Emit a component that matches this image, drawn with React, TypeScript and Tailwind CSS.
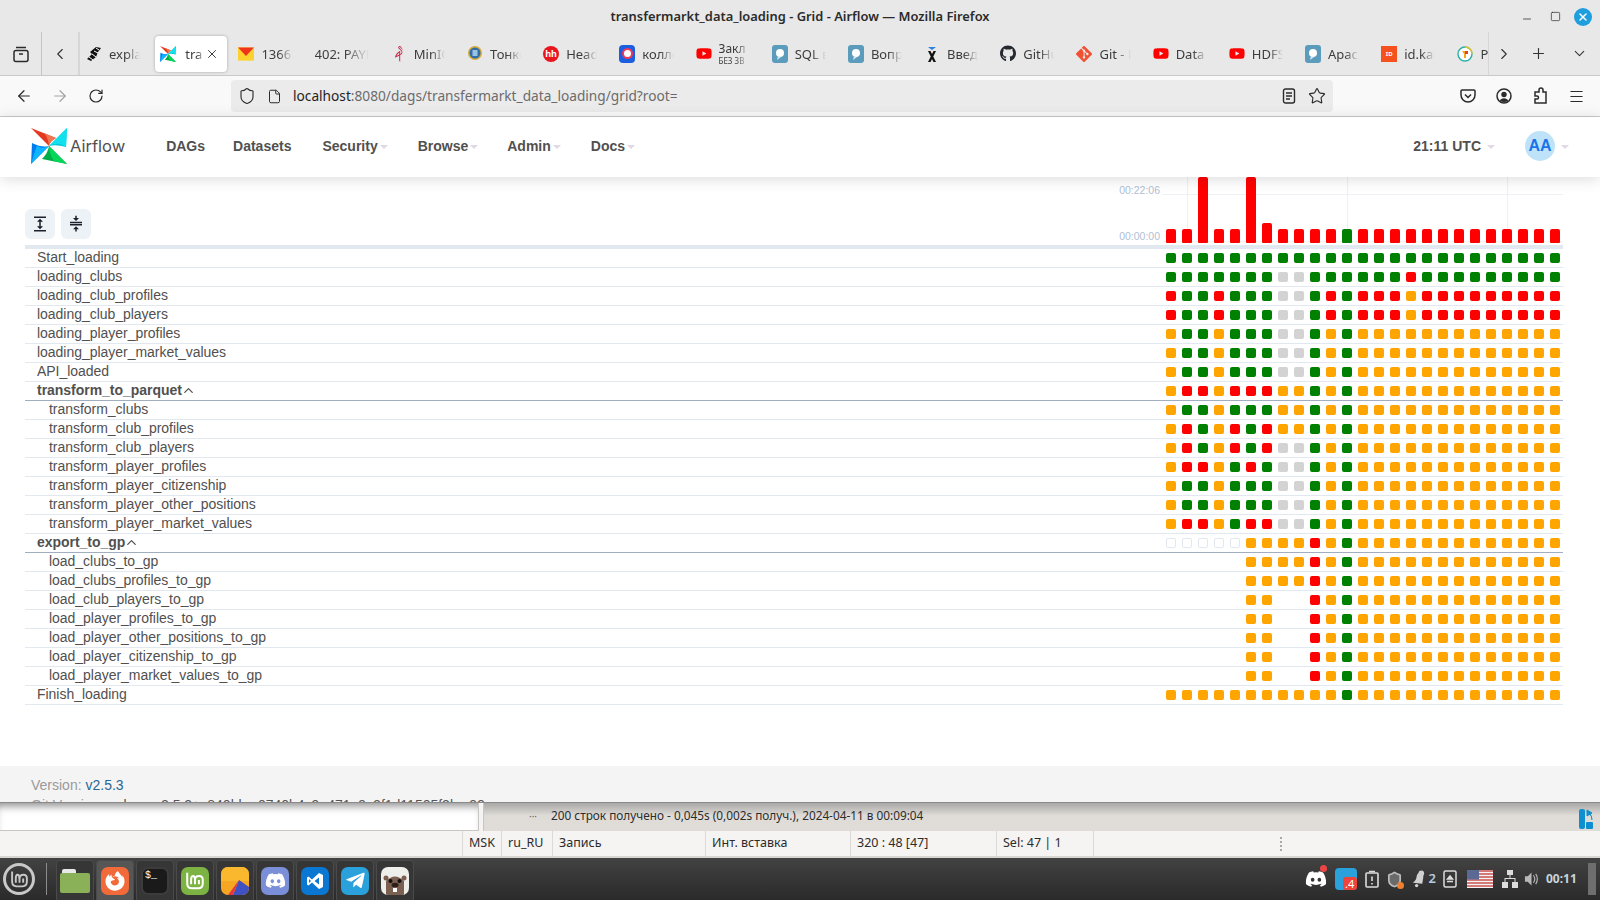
import { ReactNode } from "react";
import {
  ArrowLeft,
  ArrowRight,
  ChevronDown,
  ChevronLeft,
  ChevronRight,
  ChevronUp,
  File,
  Menu,
  Minus,
  Plus,
  RotateCw,
  Shield,
  Square,
  Star,
  X,
} from "lucide-react";
import { FaDiscord, FaFirefoxBrowser, FaGithub, FaTelegramPlane, FaYoutube } from "react-icons/fa";
import { MdCompress, MdExpand } from "react-icons/md";
import { SiGit, SiMinio } from "react-icons/si";

const uiFont = "[font-family:'Noto_Sans',sans-serif]";

const AirflowLogo = ({ size = 36 }: { size?: number }) => (
  <svg width={size} height={size} viewBox="0 0 36 36">
    <path d="M0 0 L25 10 Q19 13 18 18 Z" fill="#e43921" />
    <path d="M25 10 L13 5 Q17 9 18 18 Q19 13 25 10 Z" fill="#f0764f" />
    <path d="M36 0 L35 19 Q25 16 18 18 Z" fill="#00c7d4" />
    <path d="M36 0 L18 18 Q27 13 35 19 Z" fill="#11e1ee" />
    <path d="M36 36 L11 31 Q17 25 18 18 Z" fill="#00ad46" />
    <path d="M36 36 L18 18 Q18 26 23 33 Z" fill="#04d659" />
    <path d="M0 36 L1 15 Q11 20 18 18 Z" fill="#017cee" />
    <path d="M0 36 L18 18 Q9 22 6 17 Z" fill="#0cb6ff" />
  </svg>
);

const Drop = () => (
  <svg width="16" height="18" viewBox="0 0 16 18">
    <rect width="16" height="18" rx="3" fill="#5b9cbd" />
    <circle cx="8" cy="8" r="4" fill="#fff" />
    <path d="M6 11 L5 15 L9 12 Z" fill="#dbe9f0" />
  </svg>
);

type Tab = { icon?: ReactNode; label: string; sub?: string; active?: boolean };

const tabs: Tab[] = [
  {
    icon: (
      <svg width="16" height="16" viewBox="0 0 16 16">
        <path d="M1 13 L6 8 L4 6 L10 1 L15 2 L12 6 L10 11 L5 15 Z" fill="#111" />
        <path d="M3 11 L7 14 M6 8 L10 11 M8 5 L12 7 M10 2 L13 4" stroke="#fff" strokeWidth="1" />
      </svg>
    ),
    label: "expla",
  },
  { icon: <AirflowLogo size={16} />, label: "tra", active: true },
  {
    icon: (
      <svg width="17" height="14" viewBox="0 0 17 14">
        <rect width="17" height="14" fill="#fcd22e" />
        <path d="M0 0 H17 L8.5 9 Z" fill="#f0341c" />
      </svg>
    ),
    label: "1366",
  },
  { label: "402: PAYM" },
  { icon: <SiMinio size={16} color="#c72c48" />, label: "MinIO" },
  {
    icon: (
      <svg width="16" height="16" viewBox="0 0 16 16">
        <circle cx="8" cy="7" r="7" fill="#d6a93a" />
        <circle cx="8" cy="7" r="5.5" fill="#2f6ea8" />
        <rect x="5.5" y="4" width="5" height="6" fill="#9cc2e0" />
      </svg>
    ),
    label: "Тонко",
  },
  {
    icon: (
      <span className="flex h-4 w-4 items-center justify-center rounded-full bg-[#e8141e] text-[9px] font-bold leading-none text-white">
        hh
      </span>
    ),
    label: "Head",
  },
  {
    icon: (
      <span className="flex h-[18px] w-4 items-center justify-center rounded-[4px] bg-[#1b5ee0]">
        <span className="h-[11px] w-[11px] rounded-full border-[2.5px] border-[#f0385a] bg-white" />
      </span>
    ),
    label: "колле",
  },
  { icon: <FaYoutube size={17} color="#f00" />, label: "Закл", sub: "БЕЗ ЗВ" },
  { icon: <Drop />, label: "SQL в" },
  { icon: <Drop />, label: "Вопр" },
  {
    icon: (
      <svg width="16" height="18" viewBox="0 0 16 18">
        <path d="M4 2 H12 L8 5 Z" fill="#2e7fe0" />
        <path d="M4 6 H6.5 L12 17 H9.5 Z M9.5 6 H12 L6.5 17 H4 Z" fill="#111" />
      </svg>
    ),
    label: "Введ",
  },
  { icon: <FaGithub size={17} color="#24292f" />, label: "GitHu" },
  { icon: <SiGit size={16} color="#f05133" />, label: "Git - Б" },
  { icon: <FaYoutube size={17} color="#f00" />, label: "Data" },
  { icon: <FaYoutube size={17} color="#f00" />, label: "HDFS" },
  { icon: <Drop />, label: "Apach" },
  {
    icon: (
      <span className="flex h-4 w-4 items-center justify-center bg-[#f4511e] text-[6px] font-bold leading-none text-white">
        ID
      </span>
    ),
    label: "id.kar",
  },
  {
    icon: (
      <svg width="16" height="16" viewBox="0 0 16 16">
        <circle cx="8" cy="8" r="7" fill="#fff" stroke="#2bb0a8" strokeWidth="1.4" />
        <path d="M8 1 A7 7 0 0 1 15 8" fill="none" stroke="#e8c020" strokeWidth="1.4" />
        <path d="M5 5 H11 L9 8 V12 H7 V8 Z" fill="#f2a81e" />
        <rect x="8" y="5" width="3" height="3" fill="#e0402a" />
      </svg>
    ),
    label: "Po",
  },
];

const TabItem = ({ tab }: { tab: Tab }) => {
  if (tab.active) {
    return (
      <div className="w-[76.2px] shrink-0">
        <div className="-ml-px flex h-9 w-[72px] items-center rounded-[4px] bg-white pl-[5px] pr-2 text-[#404040] shadow-[0_0_3px_rgba(0,0,0,0.3)]">
          <span className="mr-[9px] flex w-4 shrink-0 justify-center">{tab.icon}</span>
          <div className="w-[21px] overflow-hidden whitespace-nowrap text-[13px] leading-[18px] [mask-image:linear-gradient(to_right,black_60%,transparent)]">
            {tab.label}
          </div>
          <X size={14} strokeWidth={1.5} className="ml-auto shrink-0 text-[#222]" />
        </div>
      </div>
    );
  }
  return (
    <div className="flex h-9 w-[76.2px] shrink-0 items-center gap-[7px] pl-[6px] pr-[16px] text-[#3c3c3c]">
      {tab.icon && <span className="flex w-4 shrink-0 justify-center">{tab.icon}</span>}
      <div className="min-w-0 flex-1 overflow-hidden whitespace-nowrap [mask-image:linear-gradient(to_right,black_55%,transparent)]">
        <div className={tab.sub ? "text-[12px] leading-[14px]" : "text-[13px] leading-[18px]"}>{tab.label}</div>
        {tab.sub && <div className="text-[8px] leading-[10px]">{tab.sub}</div>}
      </div>
    </div>
  );
};

const TitleBar = () => (
  <div className="grid h-8 grid-cols-[1fr_auto_1fr] items-center bg-[#e8e8e8] pt-px">
    <div />
    <div className="text-[12.9px] font-semibold text-[#2b2b2b]">
      transfermarkt_data_loading - Grid - Airflow — Mozilla Firefox
    </div>
    <div className="flex items-center justify-end pr-2">
      <Minus size={12} strokeWidth={1.6} className="mt-1 text-[#333]" />
      <Square size={11} strokeWidth={1.6} className="ml-[17px] text-[#333]" />
      <span className="ml-[13px] flex h-[18px] w-[18px] items-center justify-center rounded-full bg-[#1f9ede]">
        <X size={12} strokeWidth={3} className="text-white" />
      </span>
    </div>
  </div>
);

const TabStrip = () => (
  <div className="flex h-11 items-center border-b border-[#c9c9c9] bg-[#e8e8e8]">
    <div className="flex h-[43px] w-[42px] shrink-0 items-center justify-center border-r border-[#c4c4c4]">
      <svg width="18" height="18" viewBox="0 0 18 18" fill="none" stroke="#2b2b2b" strokeWidth="1.5">
        <path d="M4 2.5 H14" />
        <rect x="2" y="5.5" width="14" height="11" rx="2" />
        <path d="M7 9 H11" />
      </svg>
    </div>
    <div className="flex h-[43px] w-[38px] shrink-0 items-center justify-center border-r-2 border-[#d6d6d6]">
      <ChevronLeft size={18} strokeWidth={1.5} className="text-[#333]" />
    </div>
    <div className="flex h-[43px] w-[1408px] shrink-0 items-center overflow-hidden">
      {tabs.map((t) => (
        <TabItem key={t.label} tab={t} />
      ))}
    </div>
    <div className="flex h-[43px] w-[30px] shrink-0 items-center justify-center border-l border-[#d6d6d6]">
      <ChevronRight size={18} strokeWidth={1.5} className="text-[#333]" />
    </div>
    <Plus size={17} strokeWidth={1.6} className="ml-[12px] shrink-0 text-[#333]" />
    <ChevronDown size={17} strokeWidth={1.5} className="ml-6 shrink-0 text-[#333]" />
  </div>
);

const Toolbar = () => (
  <div className="flex h-[41px] items-center border-b border-[#c9c9c9] bg-[#f9f9fa]">
    <ArrowLeft size={18} strokeWidth={1.6} className="ml-[15px] text-[#2b2b2b]" />
    <ArrowRight size={18} strokeWidth={1.6} className="ml-[18px] text-[#a4a4a4]" />
    <RotateCw size={16} strokeWidth={1.8} className="ml-[19px] text-[#2b2b2b]" />
    <div className="ml-[127px] flex h-8 w-[1102px] items-center rounded-[4px] bg-[#ebebeb] pl-[7px] text-[13.7px]">
      <Shield size={18} strokeWidth={1.5} className="text-[#2b2b2b]" />
      <File size={15} strokeWidth={1.6} className="ml-[11px] text-[#2b2b2b]" />
      <span className="ml-[11px] text-[#6b6b6b]">
        <span className="text-[#1f1f1f]">localhost</span>:8080/dags/transfermarkt_data_loading/grid?root=
      </span>
      <svg width="14" height="16" viewBox="0 0 14 16" fill="none" stroke="#2b2b2b" strokeWidth="1.4" className="ml-auto">
        <rect x="1.5" y="1" width="11" height="14" rx="2" />
        <path d="M4 5 H10 M4 8 H10 M4 11 H8" />
      </svg>
      <Star size={18} strokeWidth={1.5} className="ml-[12px] mr-[7px] text-[#2b2b2b]" />
    </div>
    <div className="ml-[127px] flex items-center gap-[20px] text-[#2b2b2b]">
      <svg width="16" height="16" viewBox="0 0 16 16" fill="none" stroke="#2b2b2b" strokeWidth="1.5">
        <path d="M2 2 H14 Q15 2 15 3 V7 A7 7 0 0 1 1 7 V3 Q1 2 2 2 Z" />
        <path d="M5 6.5 L8 9.5 L11 6.5" />
      </svg>
      <svg width="16" height="16" viewBox="0 0 16 16">
        <circle cx="8" cy="8" r="7" fill="none" stroke="#2b2b2b" strokeWidth="1.5" />
        <circle cx="8" cy="6.5" r="2.7" fill="#2b2b2b" />
        <path d="M3.5 12.5 Q8 8 12.5 12.5 Q8 15.5 3.5 12.5 Z" fill="#2b2b2b" />
      </svg>
      <svg width="16" height="18" viewBox="0 0 16 18" fill="none" stroke="#2b2b2b" strokeWidth="1.5">
        <path d="M7 5 V3 Q7 1 9 1 Q11 1 11 3 V5 H14 V16 H3 V12 H5 Q6.5 12 6.5 10.5 Q6.5 9 5 9 H3 V5 Z" />
      </svg>
      <Menu size={17} strokeWidth={1.5} />
    </div>
  </div>
);

const Caret = ({ className = "" }: { className?: string }) => (
  <span
    className={`inline-block h-0 w-0 border-x-[4px] border-t-[4px] border-x-transparent border-t-[#e0d8e4] ${className}`}
  />
);

const navItems = [
  { label: "DAGs", ml: "ml-[41px]" },
  { label: "Datasets", ml: "ml-[28px]" },
  { label: "Security", caret: true, ml: "ml-[31px]" },
  { label: "Browse", caret: true, ml: "ml-[30px]" },
  { label: "Admin", caret: true, ml: "ml-[29px]" },
  { label: "Docs", caret: true, ml: "ml-[30px]" },
];

const NavBar = () => (
  <div className="relative z-10 flex h-[60px] shrink-0 items-center bg-white pb-[2px] pl-[31px] font-['Liberation_Sans',sans-serif] text-[14px] font-bold text-[#51504f] shadow-[0_2px_14px_rgba(0,0,0,0.14)]">
    <AirflowLogo />
    <span className="ml-[3px] font-['Inter',sans-serif] text-[16.5px] font-normal">Airflow</span>
    {navItems.map((n) => (
      <div key={n.label} className={`flex items-center ${n.ml}`}>
        {n.label}
        {n.caret && <Caret className="ml-[2px] mt-[2px]" />}
      </div>
    ))}
    <div className="ml-auto flex items-center pr-[31px]">
      21:11 UTC
      <Caret className="ml-[6px] mt-[2px]" />
      <span className="ml-[30px] flex h-[30px] w-[30px] items-center justify-center rounded-full bg-[#bee3f8] text-[16px] text-[#1a73e8]">
        AA
      </span>
      <Caret className="ml-[6px] mt-[2px]" />
    </div>
  </div>
);

const cellColor: Record<string, string> = {
  g: "bg-[#008000]",
  r: "bg-[#ff0000]",
  o: "bg-[#ffa500]",
  s: "bg-[#d3d3d3]",
  e: "border border-[#e2e8f0] bg-white",
  n: "",
};

type Row = { name: string; cells: string; group?: boolean; child?: boolean };

const tail = "ooooooooooooo";

const rows: Row[] = [
  { name: "Start_loading", cells: "ggggggggggggggggggggggggg" },
  { name: "loading_clubs", cells: "gggggggssggggggrggggggggg" },
  { name: "loading_club_profiles", cells: "rggrgggssgrgrrrorrrrrrrrr" },
  { name: "loading_club_players", cells: "rggrgggssgrgrrrorrrrrrrrr" },
  { name: "loading_player_profiles", cells: "oggogggssgog" + tail },
  { name: "loading_player_market_values", cells: "oggogggssgog" + tail },
  { name: "API_loaded", cells: "oggogggssgog" + tail },
  { name: "transform_to_parquet", cells: "orrorrroogog" + tail, group: true },
  { name: "transform_clubs", cells: "oggogggoogog" + tail, child: true },
  { name: "transform_club_profiles", cells: "orgorgroogog" + tail, child: true },
  { name: "transform_club_players", cells: "orgorgrssgog" + tail, child: true },
  { name: "transform_player_profiles", cells: "orrogrgssgog" + tail, child: true },
  { name: "transform_player_citizenship", cells: "oggogggssgog" + tail, child: true },
  { name: "transform_player_other_positions", cells: "oggogggssgog" + tail, child: true },
  { name: "transform_player_market_values", cells: "orrogrrssgog" + tail, child: true },
  { name: "export_to_gp", cells: "eeeeeoooorog" + tail, group: true },
  { name: "load_clubs_to_gp", cells: "nnnnnoooorog" + tail, child: true },
  { name: "load_clubs_profiles_to_gp", cells: "nnnnnoooorog" + tail, child: true },
  { name: "load_club_players_to_gp", cells: "nnnnnoonnrog" + tail, child: true },
  { name: "load_player_profiles_to_gp", cells: "nnnnnoonnrog" + tail, child: true },
  { name: "load_player_other_positions_to_gp", cells: "nnnnnoonnrog" + tail, child: true },
  { name: "load_player_citizenship_to_gp", cells: "nnnnnoonnrog" + tail, child: true },
  { name: "load_player_market_values_to_gp", cells: "nnnnnoonnrog" + tail, child: true },
  { name: "Finish_loading", cells: "ooooooooooog" + tail },
];

const barHeights = [14, 14, 66, 14, 14, 66, 20];

const DurationChart = () => (
  <div className="relative h-[66px] w-[400px]">
    <div className="absolute inset-x-0 top-[17px] h-px bg-[#edf0f5]" />
    <div className="absolute inset-x-0 top-[64px] h-px bg-[#edf0f5]" />
    <div className="absolute top-0 left-[24px] h-[64px] w-px bg-[#edf0f5]" />
    <div className="absolute top-0 left-[184px] h-[64px] w-px bg-[#edf0f5]" />
    <div className="absolute top-0 left-[344px] h-[64px] w-px bg-[#edf0f5]" />
    <span className="absolute top-[6px] right-[403px] text-[10.5px] leading-[14px] text-[#b0bfd4]">00:22:06</span>
    <span className="absolute top-[52px] right-[403px] text-[10.5px] leading-[14px] text-[#b0bfd4]">00:00:00</span>
    <div className="relative flex h-full items-end gap-[6px] pl-[3px]">
      {Array.from({ length: 25 }).map((_, i) => (
        <div
          key={i}
          className={`w-[10px] rounded-t-[2px] rounded-b-[1px] ${i === 11 ? "bg-[#008000]" : "bg-[#ff0000]"}`}
          style={{ height: barHeights[i] ?? 14 }}
        />
      ))}
    </div>
  </div>
);

const GridRow = ({ row }: { row: Row }) => (
  <div
    className={`flex h-[19px] items-center justify-between border-b ${
      row.group ? "border-[#a0aec0]" : "border-[#e2e8f0]"
    }`}
  >
    <div
      className={`flex items-center pb-[2px] leading-[18px] tracking-[-0.03px] ${
        row.child ? "pl-[24px]" : "pl-3"
      } ${row.group ? "font-bold" : ""}`}
    >
      {row.name}
      {row.group && <ChevronUp size={15} strokeWidth={2} className="-ml-px mt-px" />}
    </div>
    <div className="flex gap-[6px] pr-[3px]">
      {row.cells.split("").map((c, i) => (
        <div key={i} className={`h-[10px] w-[10px] rounded-[2px] ${cellColor[c]}`} />
      ))}
    </div>
  </div>
);

const GridPanel = () => (
  <div className="flex-1 bg-white pl-[25px] pr-[37px] font-['Liberation_Sans',sans-serif] text-[14px] text-[#51504f]">
    <div className="flex h-[68px] items-end justify-between pb-[2px]">
      <div className="mb-[4px] flex gap-[6px]">
        <button className="flex h-[30px] w-[30px] items-center justify-center rounded-[6px] bg-[#edf2f7]">
          <MdExpand size={18} className="text-[#1a202c]" />
        </button>
        <button className="flex h-[30px] w-[30px] items-center justify-center rounded-[6px] bg-[#edf2f7]">
          <MdCompress size={18} className="text-[#1a202c]" />
        </button>
      </div>
      <DurationChart />
    </div>
    <div className="border-t-4 border-[#e2e8f0]">
      {rows.map((r) => (
        <GridRow key={r.name} row={r} />
      ))}
    </div>
  </div>
);

const Footer = () => (
  <div className="h-[36px] shrink-0 overflow-hidden bg-[#f4f4f4] pl-[31px] pt-[9px] font-['Liberation_Sans',sans-serif] text-[14px] leading-[20px] text-[#9a9a9a]">
    <div>
      Version: <span className="text-[#2a6496]">v2.5.3</span>
    </div>
    <div>
      Git Version: <span className="text-[#555]">.release:2.5.3+c840bb...0740b4c9a471e9c2f1d11505f3b...99</span>
    </div>
  </div>
);

const QueryStatus = () => (
  <div className="flex h-[29px] shrink-0 border-t border-[#8a8a8a] bg-[#f5f4f2] text-[11.8px] text-[#2c2c2c]">
    <div className="w-[479px] border-r border-b border-[#c8c6c2] bg-white shadow-[inset_0_8px_8px_-5px_rgba(0,0,0,0.45)]" />
    <div className="ml-[4px] flex flex-1 items-center border-l border-[#c8c6c2] bg-[linear-gradient(#a9a8a6,#dfdcd8_45%,#e0ddd9)] pl-[45px] pb-[3px]">
      <span className="mr-[14px] text-[10px] leading-none text-[#666]">···</span>
      200 строк получено - 0,045s (0,002s получ.), 2024-04-11 в 00:09:04
      <svg width="16" height="22" viewBox="0 0 16 22" className="ml-auto mr-[6px] mt-[6px]">
        <rect x="1" y="1" width="6" height="20" rx="2" fill="#0f8fd0" />
        <rect x="8" y="14" width="7" height="7" rx="1" fill="#0f8fd0" />
        <path d="M9 2 L14 5 L9 8 Z M12 6 Q14 8 14 12" fill="#0f8fd0" stroke="#0f8fd0" />
      </svg>
    </div>
  </div>
);

const statusCells = [
  { label: "MSK", w: "w-[39px]" },
  { label: "ru_RU", w: "w-[51px]" },
  { label: "Запись", w: "w-[153px]" },
  { label: "Инт. вставка", w: "w-[145px]" },
  { label: "320 : 48 [47]", w: "w-[146px]" },
  { label: "Sel: 47 | 1", w: "w-[97px]" },
];

const StatusBar = () => (
  <div className="flex h-[27px] shrink-0 items-stretch border-b-[2px] border-[#d8d6d2] bg-[#f5f4f2] pl-[462px] text-[12.5px] text-[#2c2c2c]">
    {statusCells.map((c) => (
      <div key={c.label} className={`flex items-center border-l border-[#dcdad6] pl-[6px] ${c.w}`}>
        {c.label}
      </div>
    ))}
    <div className="flex flex-1 items-center border-l border-[#dcdad6] pl-[186px]">
      <span className="h-[14px] border-l-2 border-dotted border-[#a8a8a8]" />
    </div>
  </div>
);

const Dock = ({ children, active }: { children: ReactNode; active?: boolean }) => (
  <div
    className={`flex h-10 w-[38px] shrink-0 items-center justify-center rounded-t-[4px] border-x border-t border-[#4a4a4a] ${
      active ? "bg-[#565656]" : "bg-[#363636]"
    }`}
  >
    {children}
  </div>
);

const IconBox = ({ className, children }: { className: string; children?: ReactNode }) => (
  <div className={`flex h-7 w-7 items-center justify-center overflow-hidden rounded-[7px] ${className}`}>{children}</div>
);

// linux mint "lm" mark, also used in the menu button
const MintMark = ({ size, color }: { size: number; color: string }) => (
  <svg width={size} height={size} viewBox="3 3 18 18" fill="none" stroke={color} strokeWidth="1.8">
    <path d="M5 4.5 V14 Q5 18.5 9 18.5 H15 Q19 18.5 19 14 V11 Q19 7.5 15.8 7.5 Q12 7.5 12 11 V15" />
    <path d="M12 11 Q12 7.5 10.2 7.5 Q8.5 7.5 8.5 11 V15" />
    <path d="M15.5 11 V15" />
  </svg>
);

const Taskbar = () => (
  <div className="flex h-[42px] shrink-0 items-center bg-[linear-gradient(#424242,#2a2a2a)] pl-[3px] text-[#d8d8d8]">
    <div className="flex h-8 w-8 items-center justify-center rounded-full border-[3px] border-[#c8c8c8]">
      <MintMark size={19} color="#c8c8c8" />
    </div>
    <div className="ml-[11px] h-8 w-px bg-[#8c8c8c]" />
    <div className="ml-[9px] flex gap-[2px] self-end">
      <Dock>
        <div className="relative h-6 w-[30px]">
          <div className="absolute top-0 left-[2px] h-2 w-[14px] rounded-t-[2px] bg-[#e8e8e8]" />
          <div className="absolute inset-x-0 top-[4px] bottom-0 rounded-[2px] bg-[#8bb158]" />
        </div>
      </Dock>
      <Dock active>
        <IconBox className="bg-[#f26a3a]">
          <FaFirefoxBrowser size={20} className="text-white" />
        </IconBox>
      </Dock>
      <Dock>
        <IconBox className="items-start justify-start border-2 border-[#3c3c3c] bg-[#1a1a1a] pl-[2px] font-['Liberation_Mono',monospace] text-[10px] leading-[14px] text-white">
          $_
        </IconBox>
      </Dock>
      <Dock>
        <IconBox className="bg-[#7cb342]">
          <MintMark size={20} color="#fff" />
        </IconBox>
      </Dock>
      <Dock>
        <IconBox className="bg-[#f6a623]">
          <svg width="28" height="28" viewBox="0 0 28 28">
            <path d="M0 0 H28 V14 H0 Z" fill="#f9b82d" />
            <path d="M18 13 L28 20 V28 H12 Z" fill="#3f51c4" />
            <path d="M18 13 L12 28 H7 Z" fill="#e23b3b" />
          </svg>
        </IconBox>
      </Dock>
      <Dock>
        <IconBox className="bg-[#7a8fd8]">
          <FaDiscord size={21} className="text-white" />
        </IconBox>
      </Dock>
      <Dock>
        <IconBox className="bg-[#0a77d2]">
          <svg width="18" height="18" viewBox="0 0 18 18" fill="#fff">
            <path d="M13 1 L17 3 V15 L13 17 L6 10.5 L2.5 13.5 L1 12.5 V5.5 L2.5 4.5 L6 7.5 Z M13 5.5 L8.5 9 L13 12.5 Z M3 7 V11 L5 9 Z" fillRule="evenodd" />
          </svg>
        </IconBox>
      </Dock>
      <Dock>
        <IconBox className="bg-[#2aa1da]">
          <FaTelegramPlane size={21} className="text-white" />
        </IconBox>
      </Dock>
      <Dock>
        <IconBox className="bg-[#eeeeea]">
          <svg width="28" height="28" viewBox="0 0 28 28">
            <circle cx="5" cy="11" r="2.5" fill="#7b5f50" />
            <circle cx="23" cy="11" r="2.5" fill="#7b5f50" />
            <path d="M5 14 Q14 5 23 14 V28 H5 Z" fill="#7b5f50" />
            <circle cx="9.5" cy="14" r="2" fill="#111" />
            <circle cx="18.5" cy="14" r="2" fill="#111" />
            <ellipse cx="14" cy="18" rx="3.5" ry="2.2" fill="#2b2019" />
            <rect x="12" y="21" width="4" height="4" fill="#fff" />
          </svg>
        </IconBox>
      </Dock>
    </div>
    <div className="ml-auto flex items-center pr-[4px] text-[13px] font-semibold">
      <span className="relative">
        <FaDiscord size={22} className="text-white" />
        <span className="absolute -top-[3px] right-0 h-[7px] w-[7px] rounded-full bg-[#ef4444]" />
      </span>
      <span className="relative ml-[8px] h-[22px] w-[22px] rounded-[4px] bg-[#2aa1da]">
        <span className="absolute right-0 bottom-0 h-[13px] w-[14px] rounded-[3px] bg-[#f0433a] text-center text-[11px] font-normal leading-[13px] text-white">
          .4
        </span>
      </span>
      <svg width="14" height="18" viewBox="0 0 14 18" fill="none" stroke="#dcdcdc" strokeWidth="1.6" className="ml-[8px]">
        <rect x="1" y="3" width="12" height="14" rx="1" />
        <path d="M4 1.5 H10 M7 6.5 V11 M7 13 V14.5" />
      </svg>
      <span className="relative ml-[7px]">
        <Shield size={17} strokeWidth={2.4} fill="#6a6a6a" className="text-[#bcbcbc]" />
        <span className="absolute -right-[1px] -bottom-[1px] h-[7px] w-[7px] rounded-full bg-[#f08030]" />
      </span>
      <svg width="15" height="18" viewBox="0 0 16 18" fill="#d0d0d0" className="ml-[8px]">
        <path d="M10 2 Q14 4 13 8 L12 14 L2 13 Q6 10 6 6 Q7 2 10 2 Z" />
        <circle cx="11" cy="3" r="3" />
        <circle cx="6" cy="16" r="1.8" />
      </svg>
      <span className="ml-[3px] text-[#b9cde0]">2</span>
      <svg width="14" height="18" viewBox="0 0 14 18" fill="none" stroke="#dcdcdc" strokeWidth="1.5" className="ml-[7px]">
        <rect x="1" y="1" width="12" height="16" rx="1.5" />
        <path d="M4 11.5 H10 M7 6 L4.5 9 H9.5 Z" fill="#dcdcdc" />
      </svg>
      <svg width="26" height="18" viewBox="0 0 26 18" className="ml-[10px]">
        <rect width="26" height="18" fill="#f4f4f4" />
        <path d="M0 1 H26 M0 4 H26 M0 7 H26 M0 10 H26 M0 13 H26 M0 16 H26" stroke="#c8504c" strokeWidth="1.4" />
        <rect width="12" height="9.5" fill="#5a6a94" />
      </svg>
      <svg width="16" height="18" viewBox="0 0 16 18" fill="#dcdcdc" className="ml-[9px]">
        <rect x="5" y="0" width="6" height="5" />
        <rect x="0" y="12" width="6" height="6" />
        <rect x="10" y="12" width="6" height="6" />
        <path d="M7.5 5 H8.5 V8 H13.5 V12 H12.5 V9 H3.5 V12 H2.5 V8 H7.5 Z" />
      </svg>
      <svg width="15" height="16" viewBox="0 0 16 16" fill="#b8b8b8" className="ml-[6px]">
        <path d="M1 5 H4 L8 1 V15 L4 11 H1 Z" />
        <path d="M10 4 Q13 8 10 12 M12.5 2.5 Q16 8 12.5 13.5" fill="none" stroke="#b8b8b8" strokeWidth="1.2" />
      </svg>
      <span className="ml-[7px] w-[36px] text-[12px] font-bold text-[#c8d4dc]">00:11</span>
      <div className="ml-[6px] h-8 w-2 bg-[#6e6e6e]" />
    </div>
  </div>
);

export default function App() {
  return (
    <div className={`flex h-[900px] w-[1600px] flex-col overflow-hidden bg-[#e8e8e8] ${uiFont}`}>
      <TitleBar />
      <TabStrip />
      <Toolbar />
      <NavBar />
      <GridPanel />
      <Footer />
      <QueryStatus />
      <StatusBar />
      <Taskbar />
    </div>
  );
}
